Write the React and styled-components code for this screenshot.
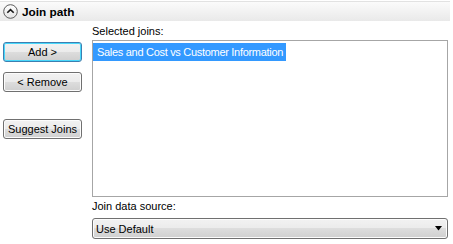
import React from "react";
import styled, { createGlobalStyle } from "styled-components";

const Global = createGlobalStyle`
  html, body { margin: 0; padding: 0; background: #ffffff; }
  body { font-family: "Liberation Sans", Arial, sans-serif; font-size: 11px; color: #000; }
`;

const Page = styled.div`
  width: 453px;
  height: 244px;
  padding-top: 1px;
  box-sizing: border-box;
  background: #ffffff;
`;

const Header = styled.div`
  width: 450px;
  height: 20px;
  box-sizing: border-box;
  border-top: 1px solid #e2e2e2;
  background: linear-gradient(#fbfbfb, #e9e9e9);
  display: flex;
  align-items: center;
  gap: 4px;
  padding-left: 3px;
`;

const Title = styled.span`
  font-family: "Liberation Sans", Arial, sans-serif;
  font-weight: bold;
  font-size: 11.8px;
  color: #000;
  line-height: 14px;
`;

const Body = styled.div`
  display: grid;
  grid-template-columns: 79px 356px;
  column-gap: 10px;
  padding-left: 3px;
`;

const ButtonColumn = styled.div`
  display: flex;
  flex-direction: column;
  padding-top: 21px;
`;

const Button = styled.button`
  width: 79px;
  height: 20px;
  margin: 0 0 ${(p) => p.$gap || 0}px 0;
  padding: 0;
  box-sizing: border-box;
  border: 1px solid ${(p) => (p.$default ? "#3c7fb1" : "#707070")};
  border-radius: 3px;
  font-family: "Liberation Sans", Arial, sans-serif;
  font-size: 11px;
  color: #000;
  background: linear-gradient(#f2f2f2 0%, #ebebeb 50%, #dddddd 50%, #cfcfcf 100%);
  box-shadow: inset 0 0 0 1px ${(p) => (p.$default ? "#48d8fb" : "#fcfcfc")};
  line-height: 16px;
`;

const RightColumn = styled.div`
  display: flex;
  flex-direction: column;
`;

const Label = styled.div`
  height: 13px;
  line-height: 13px;
  margin-top: ${(p) => p.$top}px;
  margin-bottom: ${(p) => p.$bottom}px;
  color: #000;
`;

const ListBox = styled.div`
  height: 157px;
  box-sizing: border-box;
  border: 1px solid #a6a6a6;
  background: #fff;
  padding: 2px 0 0 0;
`;

const ListItem = styled.div`
  display: inline-block;
  height: 18px;
  line-height: 18px;
  padding: 0 3px 0 4px;
  letter-spacing: -0.3px;
  background: ${(p) => (p.$selected ? "#3399ff" : "transparent")};
  color: ${(p) => (p.$selected ? "#fff" : "#000")};
  white-space: nowrap;
`;

const Combo = styled.div`
  height: 21px;
  box-sizing: border-box;
  border: 1px solid #707070;
  border-radius: 3px;
  background: linear-gradient(#f2f2f2 0%, #ebebeb 50%, #dddddd 50%, #cfcfcf 100%);
  box-shadow: inset 0 0 0 1px #fcfcfc;
  display: flex;
  align-items: center;
  justify-content: space-between;
  padding: 0 4px 0 3px;
`;

const ComboText = styled.span`
  line-height: 14px;
`;

const CollapseIcon = () => (
  <svg width="15" height="15" viewBox="0 0 15 15">
    <defs>
      <linearGradient id="cg" x1="0" y1="0" x2="0" y2="1">
        <stop offset="0" stopColor="#ffffff" />
        <stop offset="1" stopColor="#e4e4e4" />
      </linearGradient>
    </defs>
    <circle cx="7.5" cy="7.5" r="6.8" fill="url(#cg)" stroke="#5a5a5a" strokeWidth="1" />
    <path d="M4.3 8.8 L7.5 5.6 L10.7 8.8" fill="none" stroke="#1a1a1a" strokeWidth="1.6" />
  </svg>
);

const Arrow = () => (
  <svg width="8" height="5" viewBox="0 0 8 5">
    <path d="M0 0 H7 L3.5 4.5 Z" fill="#000" />
  </svg>
);

export default function App() {
  return (
    <Page>
      <Global />
      <Header>
        <CollapseIcon />
        <Title>Join path</Title>
      </Header>
      <Body>
        <ButtonColumn>
          <Button $default $gap={10}>Add &gt;</Button>
          <Button $gap={27}>&lt; Remove</Button>
          <Button>Suggest Joins</Button>
        </ButtonColumn>
        <RightColumn>
          <Label $top={4} $bottom={2}>Selected joins:</Label>
          <ListBox>
            <ListItem $selected>Sales and Cost vs Customer Information</ListItem>
          </ListBox>
          <Label $top={3} $bottom={5}>Join data source:</Label>
          <Combo>
            <ComboText>Use Default</ComboText>
            <Arrow />
          </Combo>
        </RightColumn>
      </Body>
    </Page>
  );
}
